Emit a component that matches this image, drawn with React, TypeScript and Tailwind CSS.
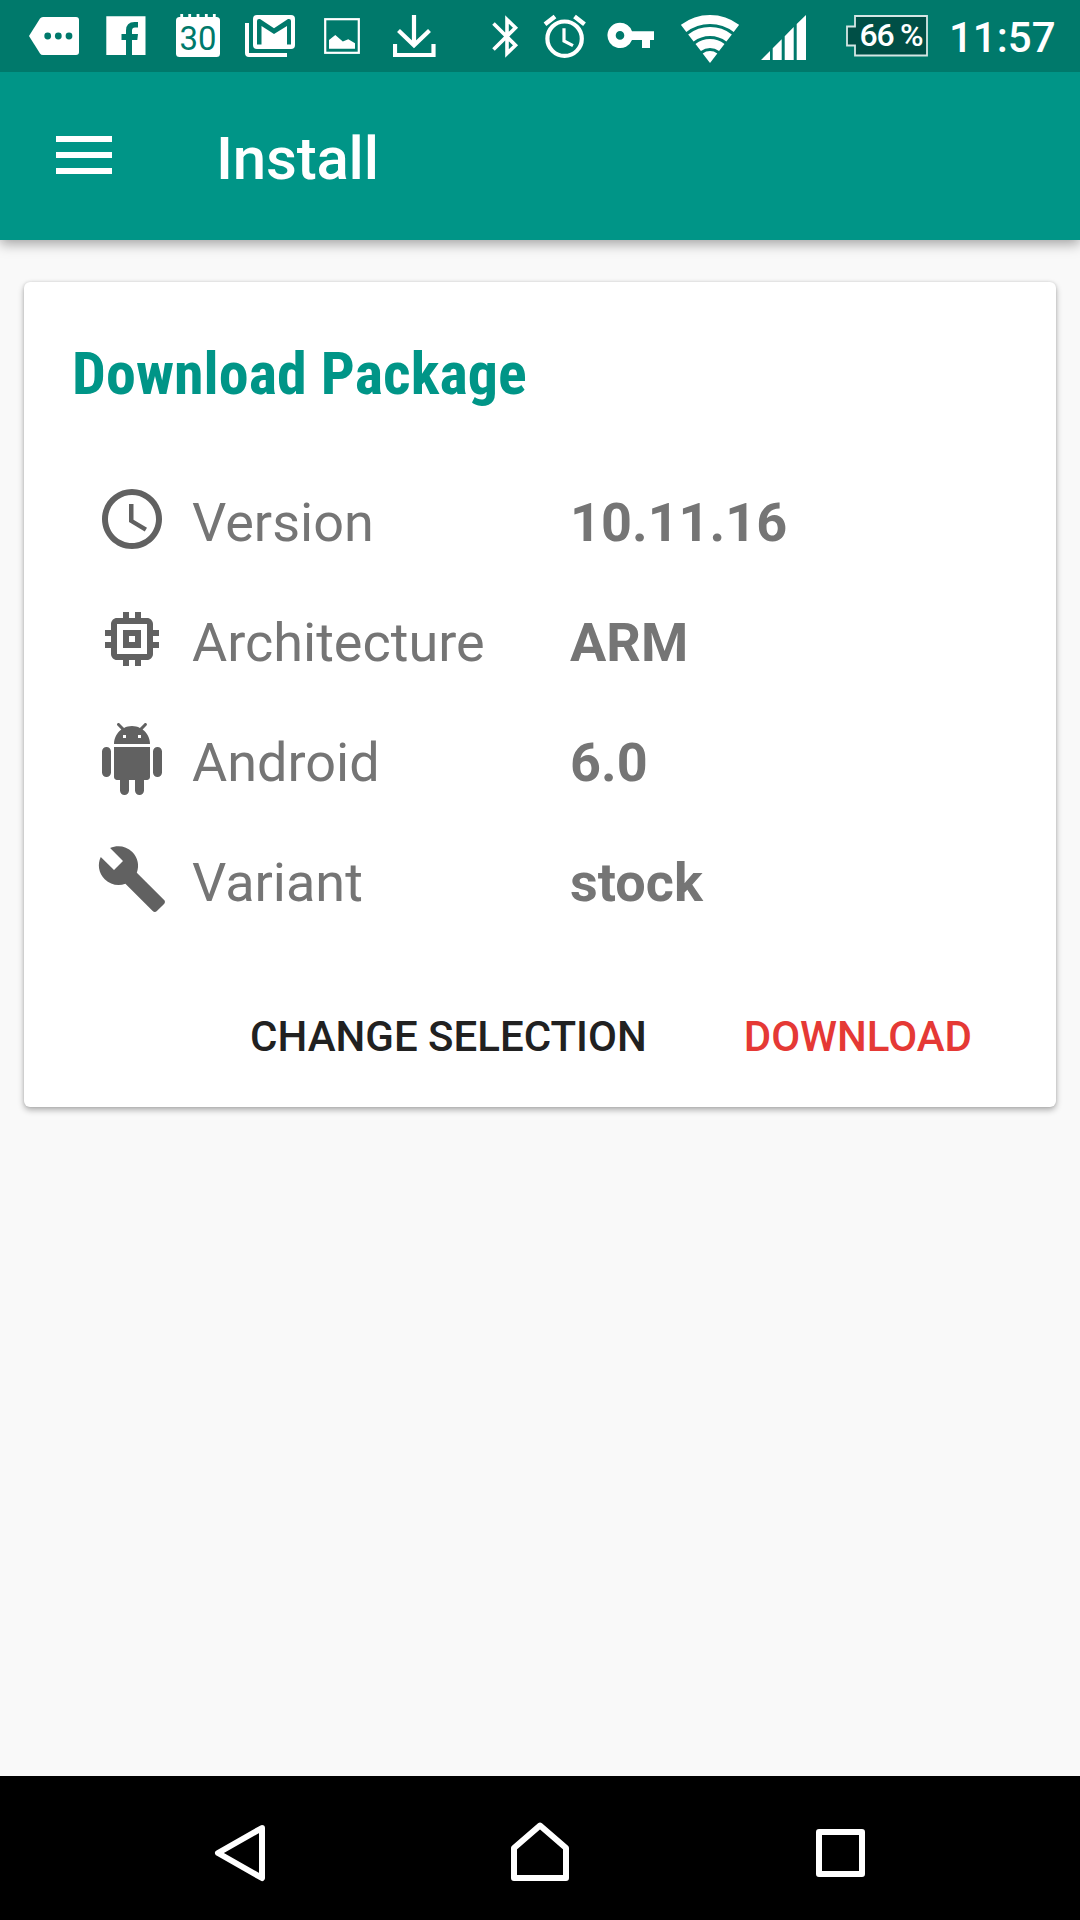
import { ReactNode } from "react";

const icons = {
  clock:
    "M11.99 2C6.47 2 2 6.48 2 12s4.47 10 9.99 10C17.52 22 22 17.52 22 12S17.52 2 11.99 2zM12 20c-4.42 0-8-3.58-8-8s3.58-8 8-8 8 3.58 8 8-3.58 8-8 8zm.5-13H11v6l5.25 3.15.75-1.23-4.5-2.67z",
  memory:
    "M15 9H9v6h6V9zm-2 4h-2v-2h2v2zm8-2V9h-2V7c0-1.1-.9-2-2-2h-2V3h-2v2h-2V3H9v2H7c-1.1 0-2 .9-2 2v2H3v2h2v2H3v2h2v2c0 1.1.9 2 2 2h2v2h2v-2h2v2h2v-2h2c1.1 0 2-.9 2-2v-2h2v-2h-2v-2h2zm-4 6H7V7h10v10z",
  android:
    "M6 18c0 .55.45 1 1 1h1v3.5c0 .83.67 1.5 1.5 1.5s1.5-.67 1.5-1.5V19h2v3.5c0 .83.67 1.5 1.5 1.5s1.5-.67 1.5-1.5V19h1c.55 0 1-.45 1-1V8H6v10zM3.5 8C2.67 8 2 8.67 2 9.5v7c0 .83.67 1.5 1.5 1.5S5 17.33 5 16.5v-7C5 8.67 4.33 8 3.5 8zm17 0c-.83 0-1.5.67-1.5 1.5v7c0 .83.67 1.5 1.5 1.5s1.5-.67 1.5-1.5v-7c0-.83-.67-1.5-1.5-1.5zm-4.97-5.84l1.3-1.3c.2-.2.2-.51 0-.71-.2-.2-.51-.2-.71 0l-1.48 1.48C13.85 1.23 12.95 1 12 1c-.96 0-1.86.23-2.66.63L7.85.15c-.2-.2-.51-.2-.71 0-.2.2-.2.51 0 .71l1.31 1.31C6.97 3.26 6 5.01 6 7h12c0-1.99-.97-3.75-2.47-4.84zM10 5H9V4h1v1zm5 0h-1V4h1v1z",
  build:
    "M22.7 19l-9.1-9.1c.9-2.3.4-5-1.5-6.9-2-2-5-2.4-7.4-1.3L9 6 6 9 1.6 4.7C.4 7.1.9 10.1 2.9 12.1c1.9 1.9 4.6 2.4 6.9 1.5l9.1 9.1c.4.4 1 .4 1.4 0l2.3-2.3c.5-.4.5-1.1.1-1.4z",
};

const details = [
  { icon: icons.clock, label: "Version", value: "10.11.16" },
  { icon: icons.memory, label: "Architecture", value: "ARM" },
  { icon: icons.android, label: "Android", value: "6.0" },
  { icon: icons.build, label: "Variant", value: "stock" },
];

// Status icons are all as tall as the bar, only the width differs
function StatusIcon({ width, className, children }: { width: number; className: string; children: ReactNode }) {
  return (
    <svg
      width={width}
      height={72}
      viewBox={`0 0 ${width} 72`}
      fill="currentColor"
      className={`shrink-0 ${className}`}
    >
      {children}
    </svg>
  );
}

function StatusBar() {
  return (
    <div className="relative z-10 flex h-[72px] items-center bg-[#00796b] text-white">
      {/* More notifications */}
      <StatusIcon width={50} className="ml-[29px]">
        <path d="M14 17H47a3 3 0 0 1 3 3V52a3 3 0 0 1-3 3H14q-2 0-3-1.5L0 36 11 18.5Q12 17 14 17z" />
        <g className="fill-[#00796b]">
          <circle cx="18.7" cy="36" r="3.4" />
          <circle cx="29.3" cy="36" r="3.4" />
          <circle cx="40" cy="36" r="3.4" />
        </g>
      </StatusIcon>
      {/* Facebook */}
      <StatusIcon width={40} className="ml-[27px]">
        <path d="M.3 16.3H39.5V55H26V40h5.3l.7-6H26v-3.5q0-3 3-3H32V22H28.5Q20 22 20 30.5V34H15.5v6H20V55H.3z" />
      </StatusIcon>
      {/* Calendar */}
      <StatusIcon width={44} className="ml-[30px]">
        <rect y="17" width="44" height="40" rx="3.5" />
        <path d="M5.7 14v5M13.7 14v5M22 14v5M30.3 14v5M38.3 14v5" stroke="currentColor" strokeWidth="2.8" />
        <text
          x="3.5"
          y="49.8"
          textLength="37"
          lengthAdjust="spacingAndGlyphs"
          className="fill-[#00796b] font-['Roboto'] text-[34px] font-normal"
        >
          30
        </text>
      </StatusIcon>
      {/* Gmail */}
      <StatusIcon width={50} className="ml-[25px]">
        <path d="M0 23h4v30h38v4H4a4 4 0 0 1-4-4z" />
        <rect x="8" y="15" width="42" height="34" rx="4" />
        <path
          className="fill-[#00796b]"
          d="M12 44.5V21q0-2 2-2h1L29 28.3 43 19h1q2 0 2 2V44.5H42V26L29 34 16.5 26V44.5z"
        />
      </StatusIcon>
      {/* Picture */}
      <StatusIcon width={36} className="ml-[29px]">
        <rect x="1.2" y="19.2" width="33.6" height="33.6" fill="none" stroke="currentColor" strokeWidth="2.2" />
        <path d="M5 48.8V40L11.3 35l7.5 6.5 5.5-2.3L31 43.3v5.5z" />
      </StatusIcon>
      {/* Download */}
      <StatusIcon width={43} className="ml-[33px]">
        <path
          d="M21 15V46M5.5 30.5L21 45.3 36.5 30.5M2 44V55H40.5V44"
          fill="none"
          stroke="currentColor"
          strokeWidth="4.2"
        />
      </StatusIcon>
      {/* Bluetooth */}
      <StatusIcon width={28} className="ml-[55px]">
        <path
          d="M2.5 23.5L24.5 45.3 16 53.5V19.5L24.5 27.7 2.5 49.5"
          fill="none"
          stroke="currentColor"
          strokeWidth="3.6"
        />
      </StatusIcon>
      {/* Alarm */}
      <StatusIcon width={43} className="ml-[24px]">
        <g fill="none" stroke="currentColor">
          <circle cx="21.6" cy="38.7" r="17.2" strokeWidth="4.2" />
          <path d="M21 28.3V41L30 45.7" strokeWidth="3.2" />
          <path d="M2 24.2L12 16.5M31.5 16.5L41.5 24.2" strokeWidth="4.5" />
        </g>
      </StatusIcon>
      {/* VPN key */}
      <StatusIcon width={47} className="ml-[21px]">
        <path
          fillRule="evenodd"
          d="M13 22.7a12.7 12.7 0 0 1 12 8.5H47V40H43V48H35V40H25A12.7 12.7 0 1 1 13 22.7zM13 31.1a4.3 4.3 0 1 0 0 8.6 4.3 4.3 0 0 0 0-8.6z"
        />
      </StatusIcon>
      {/* Wi-Fi */}
      <StatusIcon width={58} className="ml-[27px]">
        <g fill="none" stroke="currentColor" strokeWidth="9">
          <path d="M2.6 28.4A43.5 43.5 0 0 1 55.4 28.4" />
          <path d="M9.9 38A31.5 31.5 0 0 1 48.1 38" />
          <path d="M17.2 47.5A19.5 19.5 0 0 1 40.8 47.5" />
        </g>
        <path d="M29 63L21.7 53.5A12 12 0 0 1 36.3 53.5z" />
      </StatusIcon>
      {/* Signal */}
      <StatusIcon width={45} className="ml-[22px]">
        <path d="M0 60L9 51V60zM11.7 60V48.2L20.7 39.2V60zM23.7 60V36.2L32.7 27V60zM35.7 60V24L45 15V60z" />
      </StatusIcon>
      {/* Battery */}
      <StatusIcon width={82} className="ml-[40px]">
        <path
          d="M9 16H81V55.5H9V45.5H1V26.5H9z"
          className="fill-[#004f46] stroke-[#d4e6e4]"
          strokeWidth="1.8"
        />
        <text x="13.5" y="46.3" textLength="64" className="font-['Roboto'] text-[32px] font-medium">
          66 %
        </text>
      </StatusIcon>
      <span className="ml-[21px] pt-[3px] text-[42px] leading-none font-medium">11:57</span>
    </div>
  );
}

function AppBar() {
  return (
    <header className="flex h-[168px] items-center bg-[#009587] pl-14 text-white shadow-[0_4px_12px_rgba(0,0,0,0.35)]">
      <button className="flex w-14 flex-col gap-2.5 pb-0.5">
        <span className="h-1.5 w-full bg-white" />
        <span className="h-1.5 w-full bg-white" />
        <span className="h-1.5 w-full bg-white" />
      </button>
      <h1 className="ml-[104px] pt-[5px] text-[60px] leading-none font-medium tracking-[-0.2px]">Install</h1>
    </header>
  );
}

function PackageCard() {
  return (
    <section className="mx-6 mt-[42px] h-[825px] rounded-md bg-white px-12 pt-[57px] shadow-[0_3px_6px_rgba(0,0,0,0.3),0_0_3px_rgba(0,0,0,0.12)]">
      <h2 className="font-['Roboto_Condensed','Roboto'] text-[60px] leading-[70px] font-bold tracking-[0.08px] whitespace-nowrap text-[#009587]">
        Download Package
      </h2>
      <ul className="mt-[50px] pl-6">
        {details.map((item) => (
          <li key={item.label} className="flex h-[120px] items-center text-[54px] leading-none text-[#757575]">
            <svg width={72} height={72} viewBox="0 0 24 24" className="mr-6 shrink-0 fill-[#616161]">
              <path d={item.icon} />
            </svg>
            <span className="w-[378px] pt-[7px]">{item.label}</span>
            <span className="pt-[7px] font-bold">{item.value}</span>
          </li>
        ))}
      </ul>
      <div className="mt-[73px] flex justify-end gap-[97px] pr-9 text-[42px] leading-[50px] font-medium">
        <button className="text-[#212121]">CHANGE SELECTION</button>
        <button className="text-[#e53935]">DOWNLOAD</button>
      </div>
    </section>
  );
}

function NavBar() {
  return (
    <nav className="flex h-36 items-center bg-black pt-2.5 pl-[213px] text-white">
      <svg width={54} height={60} viewBox="0 0 54 60" fill="none" stroke="currentColor" strokeWidth="6" strokeLinejoin="round">
        <path d="M49 5L5 30 49 55z" />
      </svg>
      <svg
        width={58}
        height={60}
        viewBox="0 0 58 60"
        fill="none"
        stroke="currentColor"
        strokeWidth="6"
        strokeLinejoin="round"
        className="ml-[244px] overflow-visible"
      >
        <path d="M3 55V25L29 2.500 55 25V55z" />
      </svg>
      <svg width={50} height={60} viewBox="0 0 50 60" fill="none" stroke="currentColor" strokeWidth="6" strokeLinejoin="round" className="ml-[247px]">
        <rect x="3" y="9" width="43" height="42" />
      </svg>
    </nav>
  );
}

export default function App() {
  return (
    <div className="flex h-[1920px] w-[1080px] flex-col overflow-hidden bg-[#f9f9f9] font-['Roboto',sans-serif]">
      <StatusBar />
      <AppBar />
      <main className="flex-1">
        <PackageCard />
      </main>
      <NavBar />
    </div>
  );
}
